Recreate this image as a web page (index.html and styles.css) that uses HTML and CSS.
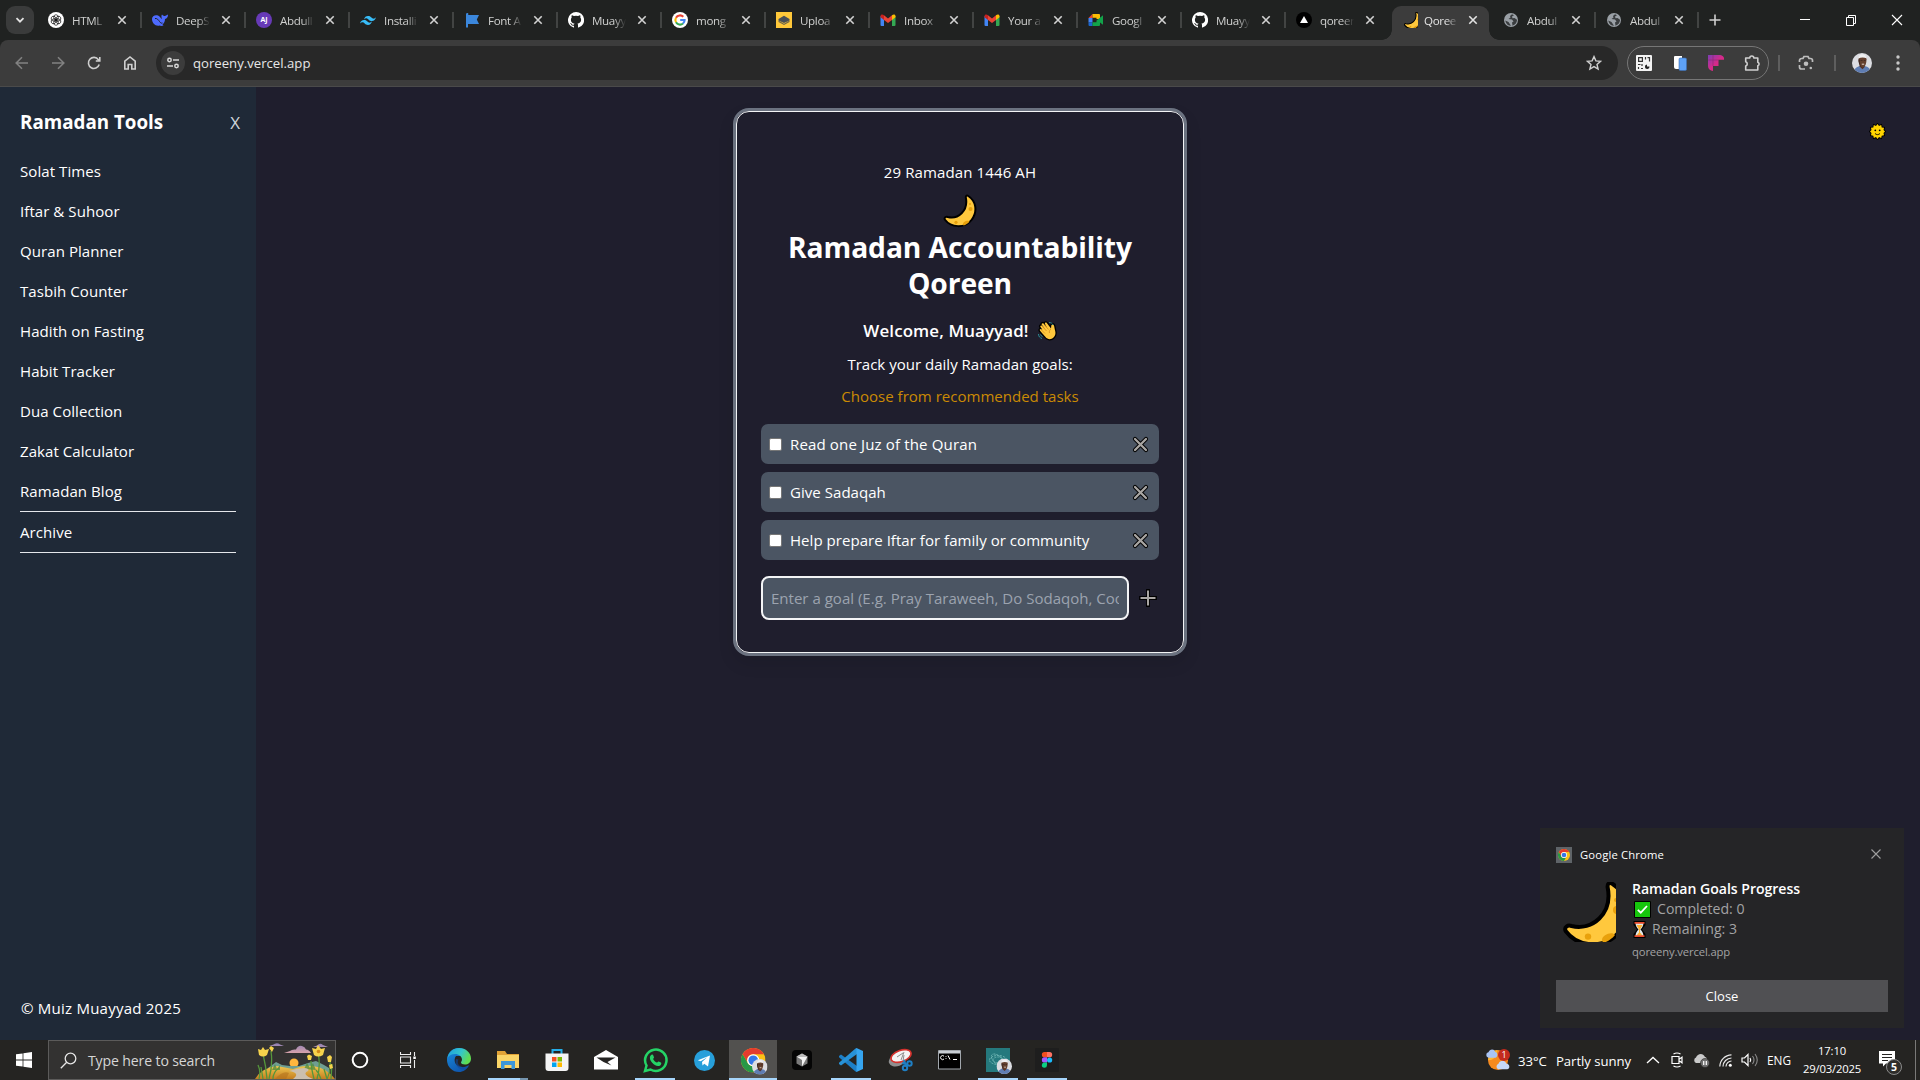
FILE: index.html
```html
<!DOCTYPE html>
<html lang="en">
<head>
<meta charset="utf-8">
<title>Qoreen</title>
<link rel="stylesheet" href="styles.css">
</head>
<body>
<svg class="sprite" xmlns="http://www.w3.org/2000/svg">
  <defs>
    <linearGradient id="edge-a" x1="0" y1="0" x2="1" y2="0.4"><stop offset="0" stop-color="#1b9de2"/><stop offset=".6" stop-color="#35c6c9"/><stop offset="1" stop-color="#5fdc52"/></linearGradient>
    <linearGradient id="edge-b" x1="0" y1="0" x2="0.6" y2="1"><stop offset="0" stop-color="#1a8fe0"/><stop offset="1" stop-color="#0f56ad"/></linearGradient>
    <linearGradient id="fx" x1="0" y1="0" x2="1" y2="1"><stop offset="0" stop-color="#7a3fb5"/><stop offset=".5" stop-color="#d62a8a"/><stop offset="1" stop-color="#e0247a"/></linearGradient>
    <linearGradient id="sky" x1="0" y1="0" x2="0" y2="1"><stop offset="0" stop-color="#8d7fb5"/><stop offset="1" stop-color="#d8a3aa"/></linearGradient>
    <linearGradient id="sand" x1="0" y1="0" x2="0" y2="1"><stop offset="0" stop-color="#f0c850"/><stop offset="1" stop-color="#c47e20"/></linearGradient>
    <clipPath id="round"><circle cx="10" cy="10" r="10"/></clipPath>
  </defs>
  <symbol id="x" viewBox="0 0 10 10"><path d="M1.3 1.3l7.4 7.4M8.7 1.3L1.3 8.7" stroke="currentColor" stroke-width="1.6" fill="none"/></symbol>
  <symbol id="github" viewBox="0 0 16 16"><path fill="#fff" d="M8 0a8 8 0 0 0-2.5 15.6c.4.1.5-.2.5-.4v-1.5c-2.2.5-2.7-.9-2.7-.9-.4-.9-.9-1.200-.9-1.200-.7-.5.1-.5.1-.5.8.1 1.200.8 1.200.8.7 1.200 1.900.9 2.300.7.1-.5.3-.9.5-1.100-1.800-.2-3.600-.9-3.600-4 0-.9.3-1.600.8-2.100-.1-.2-.4-1 .1-2.100 0 0 .7-.2 2.200.8a7.500 7.500 0 0 1 4 0c1.500-1 2.200-.8 2.200-.8.4 1.100.2 1.900.1 2.100.5.6.8 1.300.8 2.100 0 3.100-1.900 3.800-3.700 4 .3.300.6.800.6 1.500v2.200c0 .2.100.5.600.4A8 8 0 0 0 8 0z"/></symbol>
  <symbol id="gmail" viewBox="0 0 16 16"><path fill="#4285f4" d="M.5 4v9a1 1 0 0 0 1 1H4V7z"/><path fill="#34a853" d="M12 7v7h2.500a1 1 0 0 0 1-1V4z"/><path fill="#ea4335" d="M4 3.300l4 3.100 4-3.100v4.600l-4 3-4-3z"/><path fill="#c5221f" d="M.5 4.200C.5 2.300 2.600 1.900 4 3.300v4.600L.5 5.300z"/><path fill="#fbbc04" d="M12 3.300c1.400-1.400 3.500-1 3.500.9v1.100L12 7.900z"/></symbol>
  <symbol id="globe" viewBox="0 0 16 16"><circle cx="8" cy="8" r="7" fill="#9aa0a6"/><path fill="#3a3d3f" d="M9 2.200L7 4l.5 1.500L5.500 7l3.500.500 1.500 2-1.500 1 .500 3L8 13.800 5.500 10 2.200 8.500C3 12 5 13.800 8 13.800c3.500 0 6-2.600 6-6L11.500 6 9.500 6.200l-.5-1.700 2-1.300z"/></symbol>
  <symbol id="moon" viewBox="0 0 34 34"><path d="M25.300 2C33 7 35 17.500 28.500 26 22 34.500 8 34 1.800 25.500 1 23.500 2.800 22.300 4.800 23 15 25.500 25.500 17 22.800 3.500 22.700 1.500 24 1 25.300 2z" fill="#ffc83d" stroke="#000" stroke-width="2" stroke-linejoin="round"/><g fill="#e8a10c"><circle cx="27.500" cy="15" r="2"/><circle cx="13" cy="28.300" r="1.600"/><path d="M20 30c0-2.500 5-4.500 6.500-2.500-1.500 2-4 3.500-6 4z"/><circle cx="27" cy="10" r="1"/></g></symbol>
  <symbol id="moon-cut" viewBox="-3 1 30 30"><use href="#moon" width="34" height="34"/></symbol>
  <symbol id="chrome" viewBox="0 0 24 24"><circle cx="12" cy="12" r="12" fill="#fbc116"/><path fill="#e33b2e" d="M1.600 6A12 12 0 0 1 22.400 6H12A6 6 0 0 0 6.800 15z"/><path fill="#279847" d="M1.600 6A12 12 0 0 0 12 24l5.200-9A6 6 0 0 1 6.800 15z"/><circle cx="12" cy="12" r="6" fill="#fff"/><circle cx="12" cy="12" r="4.700" fill="#3577e8"/></symbol>
  <symbol id="avatar" viewBox="0 0 20 20"><g clip-path="url(#round)"><path fill="#dcdde2" d="M0 0h20v20H0z"/><path fill="#5f7db3" d="M1.500 20c.5-4.500 3-6 6-7l6 .3c3 .7 5 2.700 5.500 6.700z"/><path fill="#553429" d="M7.500 10h5l.2 4-2.200 2.200L7.500 13.500z"/><path fill="#64402f" d="M6.500 6c0-4 8-4 8 .3 0 3.500-1 7.700-3.500 7.700S6.500 10 6.500 6z"/><path fill="#3c2620" d="M6.500 6.500c-.2 3 .7 5.500 2.500 7 -1-2.500-1.500-4.500-1-7zM8.500 7.200h2v.8h-2zM11.800 7.200h1.800v.8h-1.800z"/><path fill="#efeff1" d="M6.300 5.500C6.500 2.300 8 1.300 10.300 1.300s4 1.200 4.200 4c-2.500-1.100-5.500-1-8.200.2z"/><path d="M9.800 11.200h2.400" stroke="#f0e6e0" stroke-width=".9"/></g></symbol>
  <symbol id="cross" viewBox="0 0 17 17"><path d="M3 3l11 11M14 3L3 14" stroke="#000" stroke-width="4.200" stroke-linecap="round"/><path d="M3 3l11 11M14 3L3 14" stroke="#a9a6a3" stroke-width="2.300" stroke-linecap="round"/></symbol>
</svg>

<header class="tabstrip">
  <button class="tab-search"><svg width="10" height="10" viewBox="0 0 10 10"><path d="M1.500 3.200L5 6.700l3.500-3.500" fill="none" stroke="#e3e3e3" stroke-width="1.800"/></svg></button>
  <nav class="tabs">
    <div class="tab"><svg class="fav" viewBox="0 0 16 16"><circle cx="8" cy="8" r="8" fill="#fff"/><g fill="none" stroke="#111" stroke-width=".7"><ellipse cx="8" cy="5.600" rx="2.300" ry="2.900"/><ellipse cx="8" cy="5.600" rx="2.300" ry="2.900" transform="rotate(60 8 8)"/><ellipse cx="8" cy="5.600" rx="2.300" ry="2.900" transform="rotate(120 8 8)"/><ellipse cx="8" cy="5.600" rx="2.300" ry="2.900" transform="rotate(180 8 8)"/><ellipse cx="8" cy="5.600" rx="2.300" ry="2.900" transform="rotate(240 8 8)"/><ellipse cx="8" cy="5.600" rx="2.300" ry="2.900" transform="rotate(300 8 8)"/></g></svg><span class="label">HTML</span><svg class="close"><use href="#x"/></svg></div>
    <div class="tab"><svg class="fav" viewBox="0 0 16 16"><path fill="#4d6bfe" d="M0 7c0-3 3-4.500 6-3.500 2 .7 2.500 2.500 4 3.500-.8-2-.7-3.500 0-4.500.8 1.200 2 1.800 3.500 1.200l2.500-1.200c0 2.500-1 4-3 4.500 0 2.500-1 4.500-2.500 5.500l1 1c-1.500.5-3 .5-4 0C3.500 14.500 0 11 0 7z"/><path fill="none" stroke="#202221" stroke-width="1" d="M3 6.500c2-.5 3.500 1.500 4.500 3s2 2 3 1.500"/></svg><span class="label">DeepS</span><svg class="close"><use href="#x"/></svg></div>
    <div class="tab"><span class="fav badge">AJ</span><span class="label">Abdull</span><svg class="close"><use href="#x"/></svg></div>
    <div class="tab"><svg class="fav" viewBox="0 0 16 16"><path fill="#38bdf8" d="M4 7.500C4.500 5 6 4 8 4c3 0 3.500 2.200 5 2.600 1 .3 2-.1 3-1.300-.6 2.400-2 3.700-4 3.700-3 0-3.500-2.200-5-2.600-1-.3-2 0-3 1.100zM0 11.500C.5 9.200 2 8 4 8c3 0 3.500 2.200 5 2.600 1 .3 2-.1 3-1.300-.6 2.400-2 3.600-4 3.600-3 0-3.500-2.200-5-2.600-1-.2-2 .1-3 1.200z"/></svg><span class="label">Installi</span><svg class="close"><use href="#x"/></svg></div>
    <div class="tab"><svg class="fav" viewBox="0 0 16 16"><path fill="#3b87dc" d="M2 2.200a1.200 1.200 0 1 1 2 .8h11l-2.200 4.500L15 12H4v3.500H2z"/></svg><span class="label">Font A</span><svg class="close"><use href="#x"/></svg></div>
    <div class="tab"><svg class="fav"><use href="#github"/></svg><span class="label">Muayy</span><svg class="close"><use href="#x"/></svg></div>
    <div class="tab"><svg class="fav" viewBox="0 0 16 16"><circle cx="8" cy="8" r="8" fill="#fff"/><g fill="none" stroke-width="2.100"><path stroke="#ea4335" d="M4 5.700A4.600 4.600 0 0 1 11.300 4.800"/><path stroke="#fbbc04" d="M4 5.700a4.600 4.600 0 0 0 0 4.600"/><path stroke="#34a853" d="M4 10.300a4.600 4.600 0 0 0 7 1.200"/><path stroke="#4285f4" d="M8.200 8h4.400a4.600 4.600 0 0 1-1.600 3.500"/></g></svg><span class="label">mong</span><svg class="close"><use href="#x"/></svg></div>
    <div class="tab"><svg class="fav" viewBox="0 0 16 16"><path fill="#ffc83a" d="M0 0h16v16H0z"/><path fill="#70664a" d="M2.500 8.500L8 11.800l5.500-3.300v1.600L8 13l-5.500-2.900z"/><path fill="#494f56" d="M2.500 7L8 3.800 13.500 7v1.500L8 11 2.500 8.500z"/></svg><span class="label">Uploa</span><svg class="close"><use href="#x"/></svg></div>
    <div class="tab"><svg class="fav"><use href="#gmail"/></svg><span class="label">Inbox</span><svg class="close"><use href="#x"/></svg></div>
    <div class="tab"><svg class="fav"><use href="#gmail"/></svg><span class="label">Your a</span><svg class="close"><use href="#x"/></svg></div>
    <div class="tab"><svg class="fav" viewBox="0 0 16 16"><path fill="#ea4335" d="M4.500 2v4H.5z"/><path fill="#fbbc04" d="M4.500 2H11a1 1 0 0 1 1 1v4H8.500V5.800h-4z"/><path fill="#4285f4" d="M.5 6h4v4.500h-4z"/><path fill="#1a66d0" d="M.5 10.500h4V14H1.500a1 1 0 0 1-1-1z"/><path fill="#12a34a" d="M4.500 14v-3.800h4V8.500L15 3.300v9.400L12 10.500V13a1 1 0 0 1-1 1z"/></svg><span class="label">Googl</span><svg class="close"><use href="#x"/></svg></div>
    <div class="tab"><svg class="fav"><use href="#github"/></svg><span class="label">Muayy</span><svg class="close"><use href="#x"/></svg></div>
    <div class="tab plain"><svg class="fav" viewBox="0 0 16 16"><circle cx="8" cy="8" r="8" fill="#000"/><path fill="#fff" d="M8 4l4 7H4z"/></svg><span class="label">qoreer</span><svg class="close"><use href="#x"/></svg></div>
    <div class="tab active"><svg class="fav"><use href="#moon-cut"/></svg><span class="label">Qoree</span><svg class="close"><use href="#x"/></svg></div>
    <div class="tab narrow"><svg class="fav"><use href="#globe"/></svg><span class="label">Abdul</span><svg class="close"><use href="#x"/></svg></div>
    <div class="tab narrow"><svg class="fav"><use href="#globe"/></svg><span class="label">Abdul</span><svg class="close"><use href="#x"/></svg></div>
  </nav>
  <button class="new-tab"><svg width="12" height="12" viewBox="0 0 12 12"><path d="M6 .5v11M.5 6h11" stroke="#d0d0d0" stroke-width="1.600"/></svg></button>
  <div class="window-controls">
    <svg viewBox="0 0 12 12"><path d="M1 5.500h10" stroke="#fff"/></svg>
    <svg viewBox="0 0 12 12"><path d="M1.500 3.500h7v8h-7zM3.500 3.500v-2h7v8h-2" fill="none" stroke="#fff"/></svg>
    <svg viewBox="0 0 12 12"><path d="M1 1l10 10M11 1L1 11" stroke="#fff" stroke-width="1.100"/></svg>
  </div>
</header>

<div class="toolbar">
  <div class="nav-buttons">
    <svg class="dim" viewBox="0 0 16 16"><path d="M14 8H2.500M8 2.200L2.200 8 8 13.800"/></svg>
    <svg class="dim" viewBox="0 0 16 16"><path d="M2 8h11.500M8 2.200L13.800 8 8 13.800"/></svg>
    <svg viewBox="0 0 16 16"><path d="M13.200 9.500A5.500 5.500 0 1 1 12.400 4.700L13.800 6M13.800 2v4h-4"/></svg>
    <svg viewBox="0 0 16 16"><path d="M2.800 14V6.200L8 2l5.200 4.200V14H9.800V9.500H6.200V14z"/></svg>
  </div>
  <div class="omnibox">
    <span class="site-info"><svg width="14" height="14" viewBox="0 0 14 14"><g fill="none" stroke="#d8d8d8" stroke-width="1.500"><circle cx="3.500" cy="4" r="1.700"/><path d="M7 4h6M1 10h6"/><circle cx="10.500" cy="10" r="1.700"/></g></svg></span>
    <span class="url">qoreeny.vercel.app</span>
    <svg class="star" width="16" height="16" viewBox="0 0 16 16"><path d="M8 1.600l1.900 4.300 4.700.4-3.600 3.100 1.100 4.600L8 11.600 3.900 14 5 9.400 1.400 6.300l4.700-.4z" fill="none" stroke="#d0d0d0" stroke-width="1.400"/></svg>
  </div>
  <div class="extensions">
    <svg viewBox="0 0 16 16"><rect width="16" height="16" rx="1" fill="#f3f3f3"/><g fill="none" stroke="#333" stroke-width="1.200"><path d="M2.600 2.600h3.800v3.800H2.600zM9.500 2v2.500M11.500 2.600h2v3.800M2 9.500h2.500M6 9v2M2.500 12v2M5 13.500h2"/></g><path fill="#222" d="M11 9.500v2h2.500a2.300 2.300 0 1 1-2.500-2z"/></svg>
    <svg viewBox="0 0 16 16"><path fill="#fff" d="M2 2a1 1 0 0 1 1-1h7v13H4a2 2 0 0 1-2-2z"/><rect x="7" y="3" width="7.500" height="12.500" rx="1.300" fill="#5ea2f7" stroke="#3d6fb5" stroke-width=".6"/></svg>
    <svg viewBox="0 0 16 16"><path fill="url(#fx)" d="M0 0h12a4 4 0 0 1 4 4.800H10.500V11H5v5a5 5 0 0 1-5-5z"/><path stroke="#8a2a74" stroke-width=".6" d="M5 0v11M0 5h10.500"/></svg>
    <svg viewBox="0 0 16 16"><path d="M1.700 3H5.800a2 2 0 0 1 4 0h4v4.200a1.900 1.900 0 0 1 0 3.600V15H1.700v-4a2.200 2.200 0 0 0 0-4.200z" fill="none" stroke="#cfcfcf" stroke-width="1.600" stroke-linejoin="round"/></svg>
  </div>
  <i class="divider"></i>
  <svg class="lens" viewBox="0 0 16 16"><path d="M1.500 7V5.500a2 2 0 0 1 2-2h1.500l1-2h4l1 2h1.500a2 2 0 0 1 2 2V7M1.500 10v2a2 2 0 0 0 2 2H7" fill="none" stroke="#bdbdbd" stroke-width="1.700"/><circle cx="8" cy="8.800" r="2.300" fill="#bdbdbd"/><circle cx="12.800" cy="13" r="1.300" fill="#bdbdbd"/></svg>
  <i class="divider"></i>
  <svg class="profile"><use href="#avatar"/></svg>
  <svg class="menu" width="4" height="16" viewBox="0 0 4 16"><g fill="#c8c8c8"><circle cx="2" cy="2" r="1.700"/><circle cx="2" cy="8" r="1.700"/><circle cx="2" cy="14" r="1.700"/></g></svg>
</div>

<div class="page">
  <aside class="sidebar">
    <div class="sidebar-head"><h2>Ramadan Tools</h2><button>X</button></div>
    <ul>
      <li>Solat Times</li>
      <li>Iftar &amp; Suhoor</li>
      <li>Quran Planner</li>
      <li>Tasbih Counter</li>
      <li>Hadith on Fasting</li>
      <li>Habit Tracker</li>
      <li>Dua Collection</li>
      <li>Zakat Calculator</li>
      <li class="ruled">Ramadan Blog</li>
      <li class="ruled">Archive</li>
    </ul>
    <footer>© Muiz Muayyad 2025</footer>
  </aside>

  <main class="content">
    <section class="card"><div class="card-inner">
      <p class="date">29 Ramadan 1446 AH</p>
      <svg class="moon"><use href="#moon"/></svg>
      <h1>Ramadan Accountability Qoreen</h1>
      <h3>Welcome, Muayyad! <svg class="wave" viewBox="0 0 20 20"><path d="M5.300 8.500L3.500 6c-.8-1.200.6-2.200 1.500-1.200L8 8 4.800 3.800c-.8-1.200.9-2.200 1.700-1.200L10 6.500 8 3C7.300 1.800 9 1 9.800 2l4.200 5.500.3-3c.2-1.500 2.200-1.500 2.700 0 .5 1.500.5 3 1.200 5.500.8 3-.2 5-1.700 6.500-2.500 2.500-6 2-8-.5L3 9.800c-.8-1.200.6-2.300 1.500-1.300L7 11" fill="#ffc83d" stroke="#000" stroke-width="2.600" stroke-linejoin="round"/><path d="M5.300 8.500L3.500 6c-.8-1.200.6-2.200 1.500-1.200L8 8 4.800 3.800c-.8-1.200.9-2.200 1.700-1.200L10 6.500 8 3C7.300 1.800 9 1 9.800 2l4.200 5.500.3-3c.2-1.500 2.200-1.500 2.700 0 .5 1.500.5 3 1.200 5.500.8 3-.2 5-1.700 6.500-2.500 2.500-6 2-8-.5L3 9.800c-.8-1.200.6-2.300 1.500-1.300z" fill="#ffc83d"/><path d="M5.500 5.500l4 4.500M7.500 4l4 4.500M4.500 9l3.500 3.500M14 8c-1.500 1-2 2.500-1.500 4" stroke="#d08c1e" stroke-width=".8" fill="none"/><path d="M12 1.500c2 0 3.500 1 4 2.500M1.500 13c0 2.500 1.500 4 3.500 4.500M3.500 13.500c.3 1 1 1.700 2 2" stroke="#2c8d96" stroke-width="1" fill="none"/></svg></h3>
      <p class="track">Track your daily Ramadan goals:</p>
      <p class="choose">Choose from recommended tasks</p>
      <ul class="tasks">
        <li><i class="box"></i><span class="t1">Read one Juz of the Quran</span><svg><use href="#cross"/></svg></li>
        <li><i class="box"></i><span>Give Sadaqah</span><svg><use href="#cross"/></svg></li>
        <li><i class="box"></i><span>Help prepare Iftar for family or community</span><svg><use href="#cross"/></svg></li>
      </ul>
      <div class="entry">
        <input type="text" placeholder="Enter a goal (E.g. Pray Taraweeh, Do Sodaqoh, Cook Iftar)">
        <svg viewBox="0 0 18 18"><path d="M9 2v14M2 9h14" stroke="#000" stroke-width="3.800" stroke-linecap="square"/><path d="M9 1.500v15M1.500 9h15" stroke="#a9a6a3" stroke-width="2"/></svg>
      </div>
    </div></section>
    <svg class="sun" viewBox="0 0 17 17"><path d="M8.500 1l1.500 2 2.200-1 .5 2.500 2.300.3-.5 2.200L16 8.500 14.500 10l.5 2.200-2.300.5-.5 2.300-2.200-1-1.500 2-1.500-2-2.200 1-.5-2.300-2.300-.5.5-2.200L1 8.500 2.500 7 2 4.800l2.300-.3L4.800 2 7 3z" fill="#ffd400" stroke="#000" stroke-width="1.800" paint-order="stroke"/><circle cx="6.300" cy="7.300" r=".9"/><circle cx="10.700" cy="7.300" r=".9"/><path d="M6 10.500c1.500 1.500 3.500 1.500 5 0" stroke="#000" fill="none" stroke-width=".9"/></svg>
  </main>
</div>

<footer class="taskbar">
  <div class="start"><svg width="16" height="16" viewBox="0 0 16 16"><path fill="#fff" d="M0 2.300L6.600 1.400v6.200H0zM7.400 1.300L16 0v7.600H7.400zM0 8.400h6.600v6.200L0 13.700zM7.400 8.400H16V16l-8.600-1.300z"/></svg></div>
  <div class="search">
    <svg class="glass" width="17" height="17" viewBox="0 0 17 17"><circle cx="10.500" cy="6.500" r="5.300" fill="none" stroke="#e6e6e6" stroke-width="1.300"/><path d="M6.700 10.300L.8 16.200" stroke="#e6e6e6" stroke-width="1.300"/></svg>
    <span>Type here to search</span>
    <svg class="scene" viewBox="0 0 80 38"><g fill="url(#sky)"><path d="M14 5l4-1.200q4-3 7-.2l4 1.400zM29 12l6-2q2-2 6-1.500 2-4.500 6-3.500 3 .5 4 3.500 3 0 5 3.500zM58 6l4-1.500q3-3 6-.5l5 2z"/></g><circle cx="39" cy="22" r="4.500" fill="#ffb63d"/><path fill="#6f9e92" d="M13 27l8-6 6 3 8 1h9l9-3 8-2 8 4 5 3v6H13z"/><path fill="url(#sand)" d="M0 38q6-11 22-13l16 3q10-4 20-3 14 2 22 13z"/><path fill="#4f8a3c" d="M17 29l3-6 2 5 3-4v5zM49 28l3-6 3 5 3-5 3 7z" opacity=".75"/><path fill="#cbbfae" d="M50 27q-8 0-16 3 12 2 4 8h20q-12-5-5-8 2-2-3-3z"/><path fill="#b0701c" d="M20 38q8-9 14-6-2 4-3 6z" opacity=".55"/><g stroke="#55963b" stroke-width="1.300" fill="none"><path d="M12 38Q11 25 8 13M14 38q4-14 2-28M4 38q2-8-1-14M18 38q0-7 6-11M8 38l-2-12M62 38q4-14 1-26M59 38q-3-12-3-18M72 38q4-8 3-18M66 38q-2-6-5-9M72 38l-3-10M76 38l1-15"/></g><g fill="#f6d34c"><path d="M3 8l3 1 2-3 2 3 4-1-2 6q-4 3-8 0zM57 7l4 1 2-4 3 4 4-1-2 7q-5 3-9 0zM14 7l2-2 3 2-2 4zM52 15l2-1.500 3 1.500-1 4h-3zM72 16l3-2 2 2-1 5h-3zM74 24l3-1 1 4-3 1z"/></g><circle cx="63.500" cy="10.500" r="1.800" fill="#d28b17"/></svg>
  </div>
  <div class="cell"><svg width="18" height="18" viewBox="0 0 18 18"><circle cx="9" cy="9" r="7.300" fill="none" stroke="#fff" stroke-width="2"/></svg></div>
  <div class="cell"><svg width="16" height="16" viewBox="0 0 16 16"><path d="M.5 0v2.500h10V0M.5 16v-2.500h10V16M.5 5h10v6H.5zM14.500 0v4M14.500 8v8" fill="none" stroke="#eee" stroke-width="1.100"/><path fill="#fff" d="M13.300 4.500h2.500V7h-2.500z"/></svg></div>
  <div class="apps">
    <div class="cell"><svg width="24" height="24" viewBox="0 0 24 24"><path fill="url(#edge-b)" d="M0 12A12 12 0 0 1 12 0c6 0 8 5 8 8H9c-3 4-1 10 5 11 3 .5 6-.5 8-2-2 4.500-6 7-10 7A12 12 0 0 1 0 12z"/><path fill="url(#edge-a)" d="M.5 10C1.500 4 6 0 12 0c7 0 12 5 12 10.500 0 4-3 6-6 6-2.500 0-4-1-4-2 0-.8 1-1.200 1-3C15 8.500 12 6 8 6c-3.500 0-6 1.500-7.500 4z"/><path fill="#124a9c" d="M9 11c-2 6 3 11 8 10.500 2-.2 4-1.500 5-3.500-3 1.500-6 1.500-8 .5-3-1.500-4-4-2.500-7z" opacity=".6"/></svg></div>
    <div class="cell running multi"><svg width="22" height="20" viewBox="0 0 22 20"><path fill="#e2a336" d="M0 1h8l2 3h12v14H0z"/><path fill="#fbd567" d="M0 5h22v13H0z"/><path fill="#3c97da" d="M4 11h14v8h-3.500v-4h-7v4H4z"/></svg></div>
    <div class="cell"><svg width="24" height="24" viewBox="0 0 24 24"><path d="M7.500 6V2h9v4" fill="none" stroke="#25aee8" stroke-width="2"/><path fill="#f4f4f4" d="M.5 5.500h23V20a3 3 0 0 1-3 3h-17a3 3 0 0 1-3-3z"/><path fill="#f25022" d="M7 9h4.500v4.500H7z"/><path fill="#7fba00" d="M12.500 9H17v4.500h-4.500z"/><path fill="#00a4ef" d="M7 14.500h4.500V19H7z"/><path fill="#ffb900" d="M12.500 14.500H17V19h-4.500z"/></svg></div>
    <div class="cell"><svg width="24" height="20" viewBox="0 0 24 20"><path fill="#fff" d="M0 7l12-7 12 7v12.500H0z"/><path fill="#252422" d="M2.500 7.500h19L13.500 12l4 3.500L9.500 12z"/></svg></div>
    <div class="cell running"><svg width="25" height="25" viewBox="0 0 25 25"><path d="M2 23l1.500-5.500A10.700 10.700 0 1 1 7.500 21.500z" fill="none" stroke="#25d366" stroke-width="2.500"/><path fill="#25d366" d="M8.500 6.800c1-.6 1.500 0 2 1.200l.5 1.300c.2.700-1 1.500-.8 1.900.8 1.600 2 2.700 3.600 3.400.6.200 1.200-1.400 1.900-1.100l2.200 1.100c.8.4.3 2.200-.7 2.800-2.800 1.500-6-.4-8-2.700-2.200-2.500-3.500-5.700-.7-7.900z"/></svg></div>
    <div class="cell"><svg width="21" height="21" viewBox="0 0 21 21"><circle cx="10.500" cy="10.500" r="10.500" fill="#279fda"/><path fill="#fff" d="M3.800 10.300L16 5.400l-2 11-3.700-2.700-1.800 1.800-.5-3.600 5.200-4.700-6.500 4.100z"/></svg></div>
    <div class="cell running focused"><svg width="27" height="27" viewBox="0 0 27 27"><use href="#chrome" width="24.500" height="24.500"/><use href="#avatar" x="11" y="11" width="15.500" height="15.500"/></svg></div>
    <div class="cell"><svg width="20" height="20" viewBox="0 0 20 20"><rect width="20" height="20" rx="4" fill="#050505"/><path fill="#7a7a7a" d="M4.500 6.500L10 3.500l5.500 3v7L10 16.500l-5.500-3z"/><path fill="#f2f2f2" d="M4.500 6.500h11L10 16.500V10z"/><path fill="#bbb" d="M4.500 6.500L10 3.500l5.500 3z"/></svg></div>
    <div class="cell running"><svg width="24" height="24" viewBox="0 0 24 24"><path fill="#1d7fc7" d="M0 8l2-1.500L18 18v6l-1.500-.5L0 9.200z"/><path fill="#2792d8" d="M0 16l2 1.500L18 6V0l-1.500.5L0 14.800z"/><path fill="#36a5ef" d="M17.500 0L24 3v18l-6.500 3z"/></svg></div>
    <div class="cell"><svg width="25" height="24" viewBox="0 0 25 24"><ellipse cx="9.500" cy="12" rx="9" ry="6" fill="#8f8f90" transform="rotate(-20 9.500 12)"/><ellipse cx="13" cy="8" rx="10.500" ry="5.600" fill="#f4f4f4" stroke="#d5322d" stroke-width="1.600" transform="rotate(-20 13 8)"/><path d="M9 9l6-4M13 12l3-8M15 13l1-6" stroke="#8b8b8b"/><g fill="none" stroke="#1f7fc4" stroke-width="2"><circle cx="17" cy="20" r="2.200"/><circle cx="21.500" cy="15.500" r="2.200"/><path d="M18 18l-2-6M19.500 16.500L14 15"/></g></svg></div>
    <div class="cell"><svg width="23" height="20" viewBox="0 0 23 20"><path fill="#000" stroke="#a2a7ad" d="M.5.5h22v18.500H.5z"/><path fill="#c9ced4" d="M1 1h21v2.500H1z"/><path d="M6 6.200A2 2 0 1 0 6 9M8 6v.8M8 9v-.8M10 5.500l2 4M15 9.500h4" stroke="#fff" fill="none"/></svg></div>
    <div class="cell running"><svg class="nudge" width="26" height="26" viewBox="0 0 26 26"><path fill="#25797d" d="M0 0h24v24H0z"/><g fill="none" stroke="#7cc0bd" stroke-width=".8" stroke-dasharray="2 1"><ellipse cx="12" cy="12" rx="8.500" ry="4.500"/><ellipse cx="12" cy="12" rx="8" ry="4" transform="rotate(40 12 12)"/><ellipse cx="12" cy="12" rx="5" ry="3"/></g><use href="#avatar" x="10.500" y="10.500" width="15.500" height="15.500"/></svg></div>
    <div class="cell running"><svg width="24" height="24" viewBox="0 0 24 24"><rect width="24" height="24" rx="1" fill="#1e1e1e"/><path fill="#f24e1e" d="M12 4H9.500a2.600 2.600 0 0 0 0 5.300H12z"/><path fill="#ff7262" d="M12 4h2.500a2.600 2.600 0 0 1 0 5.300H12z"/><path fill="#a259ff" d="M12 9.300H9.500a2.600 2.600 0 0 0 0 5.300H12z"/><circle cx="14.600" cy="12" r="2.600" fill="#1abcfe"/><path fill="#0acf83" d="M12 14.600H9.500a2.600 2.600 0 1 0 2.500 2.700z"/></svg></div>
  </div>

  <div class="tray">
    <svg class="weather" viewBox="0 0 26 24"><circle cx="12.500" cy="11.500" r="10.500" fill="#f58a1f"/><path fill="#fdb833" d="M2 11.500a10.500 10.500 0 0 1 10-10.500c-1 6-3 11-10 10.500z"/><path fill="#a9c4f4" d="M2.500 9a2.800 2.800 0 0 1 0-5.500C3.500-.5 9-.5 9.500 3c3 0 3 6 0 6z"/><path fill="#c5d8f8" d="M12.500 21a3 3 0 0 1 .5-5.500c1-4 7-4.500 8-.5 4 0 4.500 6 1 6z"/></svg>
    <span class="alert">1</span>
    <span class="temp">33°C</span>
    <span class="cond">Partly sunny</span>
    <i class="ic"><svg width="14" height="8" viewBox="0 0 14 8"><path d="M1 7l6-5.500L13 7" fill="none" stroke="#fff" stroke-width="1.300"/></svg></i>
    <i class="ic"><svg width="14" height="16" viewBox="0 0 14 16"><path d="M2 4.500h7v7H2zM9.500 7l2.500-1.800v5.600L9.500 9M3.500 2q3.500-2 7 0M3.500 14q3.500 2 7 0" fill="none" stroke="#fff" stroke-width="1.200"/></svg></i>
    <i class="ic"><svg width="17" height="15" viewBox="0 0 17 15"><path fill="#c9c9c9" d="M3 10a3 3 0 0 1 0-5.500C4.500.5 10-.5 12 4c2.500 0 3 6 0 6z"/><circle cx="12" cy="10" r="4.500" fill="#707070" stroke="#252422" stroke-width=".6"/><path stroke="#fff" stroke-width="1.200" d="M10.700 8v4M13.300 8v4"/></svg></i>
    <i class="ic"><svg width="13" height="13" viewBox="0 0 13 13"><g fill="none" stroke="#e8e8e8" stroke-width="1.200"><path d="M.8 12.500A12 12 0 0 1 12.500.8M4 12.500A8.700 8.700 0 0 1 12.500 4M7 12.500A5.700 5.700 0 0 1 12.500 7"/></g><circle cx="11.300" cy="11.300" r="1.500" fill="#fff"/></svg></i>
    <i class="ic"><svg width="17" height="14" viewBox="0 0 17 14"><path d="M1 5h2.500L7 1.500v11L3.500 9H1zM9 5q1.500 2 0 4" fill="none" stroke="#fff" stroke-width="1.200"/><path d="M11.500 3q3 4 0 8M14 1q4.500 6 0 12" fill="none" stroke="#8a8a8a" stroke-width="1.100"/></svg></i>
    <span class="lang">ENG</span>
    <span class="clock"><span>17:10</span><span>29/03/2025</span></span>
    <span class="action"><svg width="16" height="16" viewBox="0 0 16 16"><path fill="#fff" d="M0 0h16v12.500H7L4 15.500v-3H0z"/><path d="M3 3.500h10M3 6.500h10M3 9.500h6" stroke="#252422" stroke-width="1.100"/></svg><b>5</b></span>
    <i class="peek"></i>
  </div>
</footer>

<aside class="toast">
  <div class="toast-head"><span class="app"><svg width="12" height="12"><use href="#chrome"/></svg></span><span class="name">Google Chrome</span><svg class="dismiss" viewBox="0 0 10 10"><path d="M.5.5l9 9M9.500.5l-9 9" stroke="#9f9f9f" stroke-width="1.100"/></svg></div>
  <div class="toast-body">
    <svg class="pic"><use href="#moon-cut"/></svg>
    <div class="lines">
      <strong>Ramadan Goals Progress</strong>
      <p><svg width="17" height="17" viewBox="0 0 17 17"><path fill="#16c60c" stroke="#000" d="M.5.5h16v16H.5z"/><path d="M3.800 8.800l3 2.900L13 5" fill="none" stroke="#fff" stroke-width="1.800"/></svg><span>Completed: 0</span></p>
      <p class="left"><svg width="13" height="17" viewBox="0 0 13 17"><path fill="#000" d="M.5 0h12v4L9 8.500l3.500 4.500v4H.5v-4L4 8.500.5 4z"/><path fill="#dfe7ea" d="M2.500 2h8c0 3-1.500 5-3 6.500 1.500 1.500 3 3.500 3 6.500h-8c0-3 1.500-5 3-6.500-1.500-1.500-3-3.500-3-6.500z"/><path fill="#ffb02e" d="M3.500 4h6L7 8.500v3l2.500 3h-6l2.500-3v-3z"/><path fill="#e8492a" d="M1.500 1h10v1.700h-10zM1.500 14.300h10V16h-10z"/></svg><span>Remaining: 3</span></p>
      <small>qoreeny.vercel.app</small>
    </div>
  </div>
  <button>Close</button>
</aside>
</body>
</html>
```
FILE: styles.css
```css
* { box-sizing: border-box; margin: 0; padding: 0; }
body {
  width: 1920px; height: 1080px; overflow: hidden;
  display: flex; flex-direction: column;
  background: #202221; color: #fff;
  font-family: "Open Sans", "Noto Sans", sans-serif; font-size: 15.04px;
}
ul { list-style: none; }
button { border: 0; background: none; color: inherit; font-family: inherit; }
.sprite { position: absolute; width: 0; height: 0; }
svg { display: block; flex: none; }

/* Browser tab strip */
.tabstrip { height: 40px; flex: none; display: flex; align-items: center; padding-left: 6px; }
.tab-search { width: 28px; height: 28px; border-radius: 9px; background: #3a3b3b; display: grid; place-items: center; }
.tabs { display: flex; align-self: stretch; margin-left: 4px; }
.tab { position: relative; width: 104px; display: flex; align-items: center; padding-left: 10px; color: #cfd0cf; }
.tab::after { content: ""; width: 2px; height: 16px; background: #424443; margin-left: auto; }
.tab.plain::after { background: none; }
.tab.narrow { width: 103px; }
.fav { width: 16px; height: 16px; flex: none; }
.badge { border-radius: 50%; background: #673ab7; color: #fff; font-size: 7px; font-weight: 700; line-height: 16px; text-align: center; }
.label {
  width: 34px; margin-left: 8px; padding-top: 1px; overflow: hidden; white-space: nowrap;
  font-size: 11.6px; letter-spacing: -0.35px; line-height: 18px;
  -webkit-mask-image: linear-gradient(90deg, #000 65%, transparent);
  mask-image: linear-gradient(90deg, #000 65%, transparent);
}
.close { width: 10px; height: 10px; margin-left: 11px; color: #d2d2d2; }
.tab.active { width: 97px; margin: 6px 4px 0 2px; padding-bottom: 6px; background: #3c3c3c; border-radius: 9px 9px 0 0; color: #e3e3e3; }
.tab.active .label { margin-left: 6px; }
.tab.active .close { margin-left: 10px; color: #e3e3e3; }
.tab.active::before, .tab.active::after { content: ""; position: absolute; bottom: 0; width: 10px; height: 10px; }
.tab.active::before { left: -10px; background: radial-gradient(circle at 0 0, transparent 9.5px, #3c3c3c 10px); }
.tab.active::after { right: -10px; background: radial-gradient(circle at 100% 0, transparent 9.5px, #3c3c3c 10px); }
.tab.narrow .close { margin-left: 10px; }
.new-tab { padding: 0 10px; }
.window-controls { display: flex; gap: 34px; margin: 0 17px 0 auto; }
.window-controls svg { width: 12px; height: 12px; }

/* Address row */
.toolbar { height: 47px; flex: none; display: flex; align-items: center; background: #3c3c3c; border-radius: 8px 8px 0 0; border-bottom: 1px solid #4a4a4a; }
.nav-buttons { display: flex; gap: 20px; padding-left: 14px; width: 156px; }
.nav-buttons svg { width: 16px; height: 16px; fill: none; stroke: #cfcfcf; stroke-width: 1.6; }
.nav-buttons .dim { stroke: #818181; }
.omnibox { width: 1462px; height: 34px; border-radius: 17px; background: #282828; display: flex; align-items: center; padding: 0 16px 0 5px; }
.site-info { width: 24px; height: 24px; border-radius: 50%; background: #3c3c3c; display: grid; place-items: center; }
.url { margin-left: 8px; font-size: 13.16px; color: #e6e6e6; }
.star { margin-left: auto; }
.extensions { width: 142px; height: 34px; margin-left: 9px; border: 1px solid #767676; border-radius: 17px; display: flex; align-items: center; gap: 20px; padding-left: 8px; }
.extensions svg { width: 16px; height: 16px; }
.divider { width: 2px; height: 16px; background: #5e5e5e; margin-left: 9px; }
.lens { width: 16px; height: 16px; margin: 0 11px 0 18px; }
.profile { width: 20px; height: 20px; margin-left: 16px; }
.menu { margin-left: 24px; }

/* Web page */
.page { flex: 1; display: flex; background: #1f1e2d; }
.sidebar { width: 256px; background: #1f2937; padding: 20px; display: flex; flex-direction: column; }
.sidebar-head { height: 30px; display: flex; justify-content: space-between; align-items: center; margin-bottom: 14px; }
.sidebar-head h2 { font-size: 18.8px; line-height: 30px; }
.sidebar-head button { font-size: 17px; color: #d1d5db; margin: 1px -4px 0 0; }
.sidebar li { line-height: 40px; letter-spacing: 0.06px; }
.sidebar li.ruled { border-bottom: 1px solid #e5e7eb; }
.sidebar footer { margin-top: auto; padding-left: 1px; line-height: 24px; letter-spacing: 0.22px; }

.content { flex: 1; display: grid; grid-template-columns: 477px 454px 1fr; align-items: start; }
.card { grid-column: 2; height: 548px; margin-top: 21px; border: 3px solid #6b7280; border-radius: 16px; box-shadow: 0 8px 16px rgba(0,0,0,.1); }
.card-inner { height: 100%; border: 1px solid #f3f4f6; border-radius: 13px; padding: 48px 24px 0; display: flex; flex-direction: column; align-items: center; text-align: center; }
.date { line-height: 24px; letter-spacing: 0.1px; }
.moon { width: 34px; height: 34px; margin-top: 10px; }
.card h1 { font-size: 28.2px; line-height: 36px; letter-spacing: -0.05px; margin-top: 1px; }
.card h3 { display: flex; align-items: center; gap: 8px; font-size: 16.92px; font-weight: 600; line-height: 28px; letter-spacing: 0.12px; margin-top: 16px; }
.wave { width: 20px; height: 20px; }
.track { line-height: 24px; margin-top: 7px; }
.choose { line-height: 24px; margin-top: 8px; color: #ca8a04; }
.tasks { align-self: stretch; display: grid; gap: 8px; margin-top: 16px; }
.tasks li { height: 40px; display: flex; align-items: center; background: #4b5563; border-radius: 7px; padding: 0 10px 0 8px; letter-spacing: 0.03px; }
.tasks svg { width: 17px; height: 17px; margin-left: auto; }
.box { width: 13px; height: 13px; background: #fff; border: 1px solid #767676; border-radius: 2px; margin-right: 8px; }
.t1 { letter-spacing: 0.14px; }
.entry { align-self: stretch; display: flex; align-items: center; margin-top: 16px; }
.entry input { width: 368px; height: 44px; border: 2px solid #f3f4f6; border-radius: 8px; background: #4b5563; padding: 0 8px; font: inherit; color: #fff; }
.entry input::placeholder { color: #9ca3af; opacity: 1; }
.entry svg { width: 18px; height: 18px; margin-left: 10px; }
.sun { width: 17px; height: 17px; justify-self: end; margin: 36px 34px 0 0; }

/* Taskbar */
.taskbar { height: 40px; flex: none; display: flex; background: #252422; }
.start { width: 48px; display: grid; place-items: center; }
.search { width: 288px; border: 1px solid #5c5b5a; background: #333231; display: flex; align-items: center; color: #d6d6d6; }
.search .glass { margin-left: 11px; }
.search span { font-size: 14.1px; letter-spacing: -0.14px; margin-left: 11px; }
.scene { width: 80px; height: 38px; margin-left: auto; }
.cell { width: 48px; display: grid; place-items: center; }
.apps { display: flex; gap: 1px; margin-left: 3px; }
.running { background: linear-gradient(#a6d5fb, #a6d5fb) 50% 100% / 40px 2px no-repeat; }
.multi { background: linear-gradient(90deg, #a6d5fb 32px, #7595ae 32px) 50% 100% / 40px 2px no-repeat; }
.focused { background: linear-gradient(#a6d5fb, #a6d5fb) 0 100% / 48px 2px no-repeat, #52514f; }
.focused svg, .nudge { margin: 2px 0 0 2px; }
.tray { margin-left: auto; display: flex; align-items: center; font-size: 13.16px; letter-spacing: -0.05px; }
.weather { width: 25px; height: 23px; margin-right: -13px; }
.alert { width: 12px; height: 12px; border-radius: 50%; background: #c42b1c; font-size: 9px; line-height: 12px; text-align: center; margin: -11px 8px 0 0; }
.temp { width: 38px; }
.cond { width: 85px; }
.temp, .cond { padding-top: 2px; }
.ic { width: 24px; display: grid; place-items: center; }
.lang { width: 36px; text-align: center; font-size: 11.8px; }
.clock { width: 70px; display: flex; flex-direction: column; align-items: center; font-size: 11.28px; line-height: 18px; letter-spacing: -0.18px; }
.action { width: 48px; height: 40px; display: flex; align-items: center; padding-left: 12px; }
.action svg { margin-bottom: 2px; }
.action b { width: 16px; height: 16px; border: 1px solid #8b8b8b; border-radius: 50%; background: #2e2d2b; font-size: 10.5px; line-height: 14px; text-align: center; margin: 14px 0 0 -9px; }
.peek { width: 1px; height: 40px; background: #7a7978; margin-right: 4px; }

/* Desktop notification, floats above the page */
.toast { position: absolute; left: 1540px; top: 828px; width: 364px; height: 200px; background: #252527; padding: 19px 16px 16px; display: flex; flex-direction: column; }
.toast-head { display: flex; align-items: center; height: 16px; font-size: 11.28px; letter-spacing: 0.15px; }
.name { margin-top: -2px; }
.app { width: 16px; height: 16px; background: #5f6468; display: grid; place-items: center; margin-right: 8px; }
.dismiss { width: 10px; height: 10px; margin: -2px 7px 0 auto; }
.toast-body { display: flex; gap: 16px; margin-top: 19px; }
.pic { width: 60px; height: 60px; }
.lines { margin-top: -3px; font-size: 14.1px; line-height: 20px; color: #a3a3a4; }
.lines strong { display: block; font-weight: 600; color: #fff; letter-spacing: -0.04px; }
.lines p { display: flex; align-items: center; gap: 6px; padding-left: 2px; }
.lines .left { padding-left: 1px; }
.lines small { display: block; font-size: 11.28px; line-height: 16px; letter-spacing: -0.14px; margin-top: 5px; }
.toast button { height: 32px; margin-top: auto; background: #505053; font-size: 13px; }
```
